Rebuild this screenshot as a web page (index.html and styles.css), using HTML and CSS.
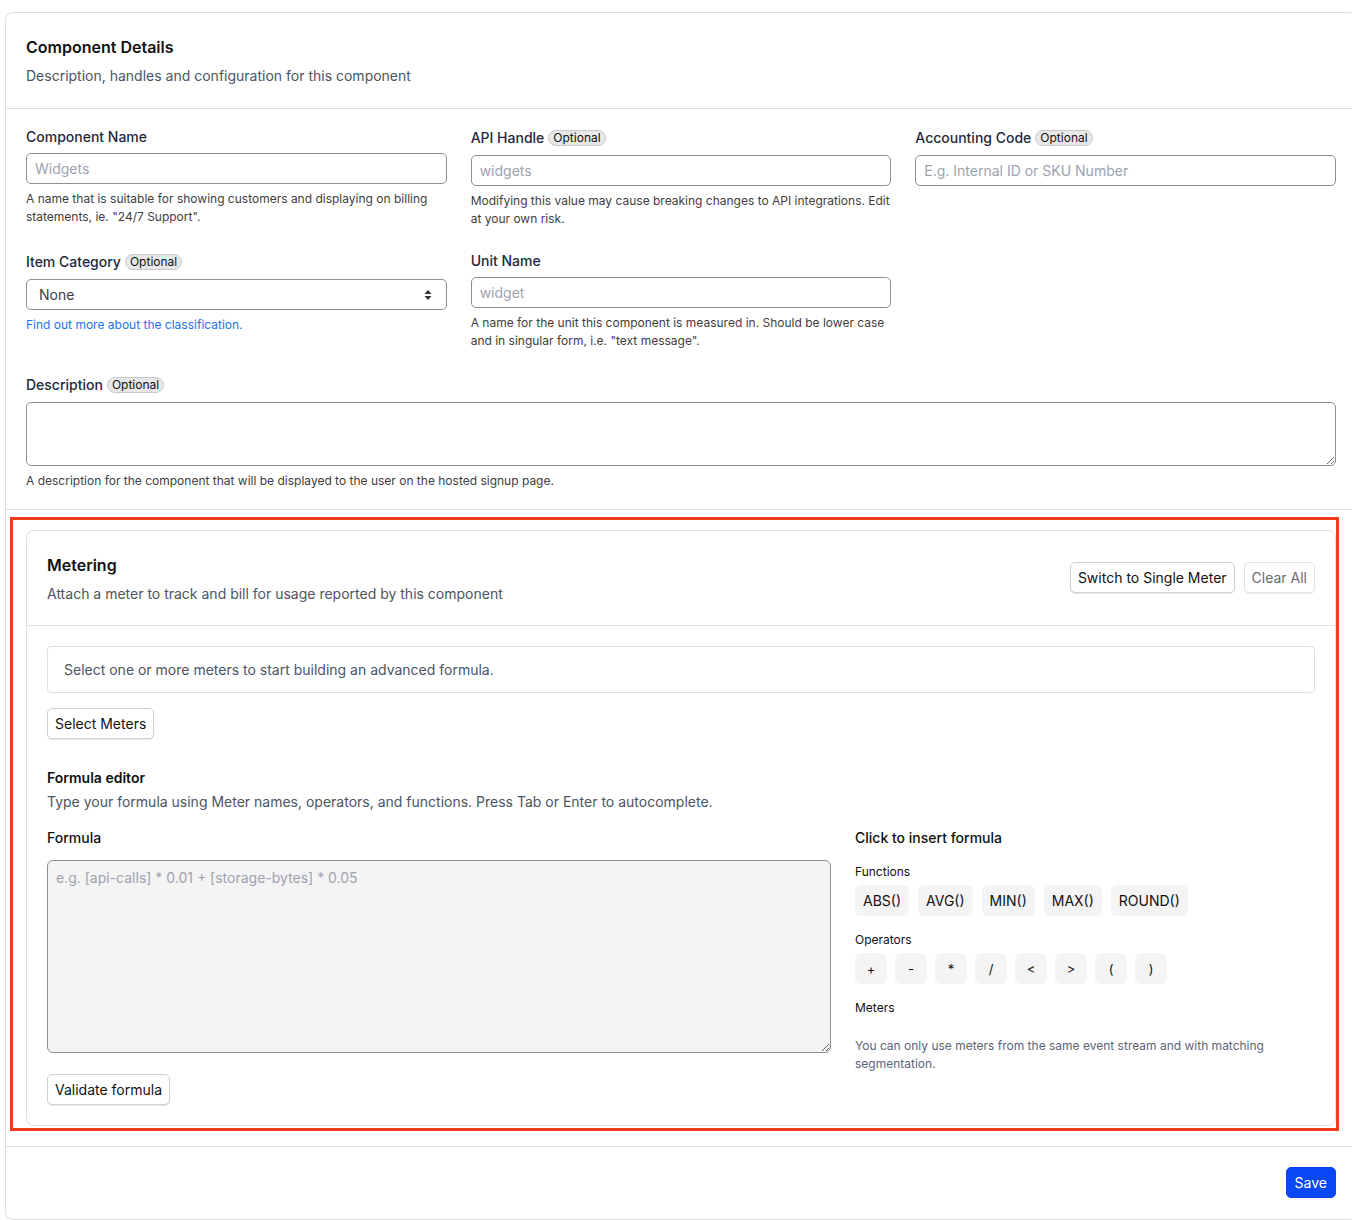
FILE: index.html
```html
<!DOCTYPE html>
<html lang="en">
<head>
<meta charset="utf-8">
<title>Component Details</title>
<link rel="stylesheet" href="styles.css">
</head>
<body>
<div class="card">
  <header class="card-head">
    <h1 class="title">Component Details</h1>
    <p class="subtitle">Description, handles and configuration for this component</p>
  </header>

  <section class="fields">
    <div class="field">
      <label class="label">Component Name</label>
      <input class="input" type="text" placeholder="Widgets">
      <p class="help">A name that is suitable for showing customers and displaying on billing statements, ie. "24/7 Support".</p>
    </div>
    <div class="field">
      <label class="label">API Handle <span class="badge">Optional</span></label>
      <input class="input" type="text" placeholder="widgets">
      <p class="help">Modifying this value may cause breaking changes to API integrations. Edit at your own risk.</p>
    </div>
    <div class="field">
      <label class="label">Accounting Code <span class="badge">Optional</span></label>
      <input class="input" type="text" placeholder="E.g. Internal ID or SKU Number">
    </div>

    <div class="field">
      <label class="label">Item Category <span class="badge">Optional</span></label>
      <div class="select-wrap">
        <select class="select"><option>None</option></select>
        <svg class="select-icon" width="8" height="12" viewBox="0 0 8 12"><path d="M4 1 L7.5 5 H0.5 Z M4 11 L7.5 7 H0.5 Z" fill="#333"/></svg>
      </div>
      <a class="link" href="#">Find out more about the classification.</a>
    </div>
    <div class="field">
      <label class="label">Unit Name</label>
      <input class="input" type="text" placeholder="widget">
      <p class="help">A name for the unit this component is measured in. Should be lower case and in singular form, i.e. "text message".</p>
    </div>
    <div class="field"></div>

    <div class="field span-3 desc-field">
      <label class="label">Description <span class="badge">Optional</span></label>
      <textarea class="textarea desc"></textarea>
      <p class="help">A description for the component that will be displayed to the user on the hosted signup page.</p>
    </div>
  </section>

  <section class="metering-section">
    <div class="metering">
      <div class="m-head">
        <div>
          <h2 class="title">Metering</h2>
          <p class="subtitle">Attach a meter to track and bill for usage reported by this component</p>
        </div>
        <div class="m-actions">
          <button class="btn">Switch to Single Meter</button>
          <button class="btn btn-muted">Clear All</button>
        </div>
      </div>
      <div class="m-body">
        <div class="info">Select one or more meters to start building an advanced formula.</div>
        <button class="btn btn-select">Select Meters</button>

        <h3 class="fe-title">Formula editor</h3>
        <p class="fe-sub">Type your formula using Meter names, operators, and functions. Press Tab or Enter to autocomplete.</p>

        <div class="fe-grid">
          <div class="fe-left">
            <div class="fe-label">Formula</div>
            <textarea class="textarea formula" placeholder="e.g. [api-calls] * 0.01 + [storage-bytes] * 0.05"></textarea>
            <button class="btn btn-validate">Validate formula</button>
          </div>
          <div class="fe-right">
            <div class="fe-label">Click to insert formula</div>
            <div class="group-label">Functions</div>
            <div class="chips">
              <span class="chip">ABS()</span>
              <span class="chip">AVG()</span>
              <span class="chip">MIN()</span>
              <span class="chip">MAX()</span>
              <span class="chip">ROUND()</span>
            </div>
            <div class="group-label">Operators</div>
            <div class="chips ops">
              <span class="chip op">+</span>
              <span class="chip op">-</span>
              <span class="chip op">*</span>
              <span class="chip op">/</span>
              <span class="chip op">&lt;</span>
              <span class="chip op">&gt;</span>
              <span class="chip op">(</span>
              <span class="chip op">)</span>
            </div>
            <div class="group-label">Meters</div>
            <p class="meters-help">You can only use meters from the same event stream and with matching segmentation.</p>
          </div>
        </div>
      </div>
    </div>
    <div class="highlight"></div>
  </section>

  <footer class="card-foot">
    <button class="btn-primary">Save</button>
  </footer>
</div>
</body>
</html>
```

FILE: styles.css
```css
* { box-sizing: border-box; }

html, body {
  margin: 0;
  padding: 0;
  overflow: hidden;
  background: #ffffff;
}

body {
  font-family: Inter, "Noto Sans", "Liberation Sans", sans-serif;
  color: #111111;
  font-size: 14px;
}

p, h1, h2, h3 { margin: 0; }

.card {
  margin: 12px 0 0 5px;
  width: 1352px;
  height: 1208px;
  border: 1px solid #dedede;
  border-radius: 8px;
  background: #fff;
}

.card-head {
  padding: 22px 20px 22px;
  border-bottom: 1px solid #e0e0e0;
}

.title {
  font-size: 16px;
  line-height: 24px;
  font-weight: 600;
  color: #111111;
}

.subtitle {
  margin-top: 7px;
  font-size: 14px;
  line-height: 20px;
  color: #4a5565;
}

.fields {
  display: grid;
  grid-template-columns: repeat(3, 1fr);
  column-gap: 24px;
  row-gap: 23px;
  padding: 18px 20px 19px;
  border-bottom: 1px solid #e0e0e0;
}

.span-3 { grid-column: 1 / span 3; }

.field {
  display: flex;
  flex-direction: column;
}

.desc-field {
  margin-top: 1px;
}

.label {
  display: flex;
  align-items: center;
  gap: 4px;
  min-height: 20px;
  font-size: 14px;
  line-height: 20px;
  font-weight: 500;
  color: #1e293b;
  margin-bottom: 6px;
}

.badge {
  display: inline-block;
  height: 16px;
  margin: 3px 0;
  padding: 0 4px;
  border: 1px solid #c9c9c9;
  border-radius: 9999px;
  background: #e8e8e8;
  font-size: 12px;
  line-height: 14px;
  font-weight: 400;
  color: #111;
}

.input {
  height: 31px;
  width: 100%;
  padding: 0 8px;
  border: 1px solid #8e8e8e;
  border-radius: 5px;
  font-family: inherit;
  font-size: 14px;
  color: #111;
  background: #fff;
}

.input::placeholder,
.textarea::placeholder {
  color: #9ca3af;
}

.help {
  margin-top: 6px;
  font-size: 12px;
  line-height: 18px;
  color: #404040;
}

.select-wrap {
  position: relative;
}

.select {
  appearance: none;
  -webkit-appearance: none;
  width: 100%;
  height: 31px;
  padding: 0 12px;
  border: 1px solid #8e8e8e;
  border-radius: 5px;
  background: #fff;
  font-family: inherit;
  font-size: 14px;
  color: #3d3d3d;
}

.select-icon {
  position: absolute;
  right: 15px;
  top: 10px;
  pointer-events: none;
}

.link {
  margin-top: 6px;
  font-size: 12px;
  line-height: 18px;
  color: #1d74e8;
  text-decoration: none;
}

.textarea {
  display: block;
  width: 100%;
  border: 1px solid #8e8e8e;
  border-radius: 5px;
  font-family: inherit;
  font-size: 14px;
  padding: 8px;
  color: #111;
}

.desc {
  height: 64px;
  background: #fff;
}

.metering-section {
  position: relative;
  padding: 20px 20px 20px;
  border-bottom: 1px solid #e0e0e0;
}

.highlight {
  position: absolute;
  left: 4px;
  top: 7px;
  width: 1329px;
  height: 614px;
  border: 3px solid #f5391c;
  pointer-events: none;
}

.metering {
  border: 1px solid #e0e0e0;
  border-radius: 8px;
}

.m-head {
  display: flex;
  justify-content: space-between;
  align-items: center;
  padding: 22px 20px 21px;
  border-bottom: 1px solid #e0e0e0;
}

.m-actions {
  display: flex;
  gap: 9px;
  margin-top: -2px;
}

.btn {
  height: 31px;
  padding: 0 7px;
  border: 1px solid #cfcfcf;
  border-radius: 5px;
  background: #fff;
  font-family: inherit;
  font-size: 14px;
  color: #111;
  box-shadow: 0 1px 1px rgba(0, 0, 0, 0.08);
}

.btn-muted {
  color: #6b6b6b;
  border-color: #e3e3e3;
}

.m-body {
  padding: 20px 20px 20px;
}

.info {
  padding: 13px 16px;
  border: 1px solid #e0e0e0;
  border-radius: 4px;
  font-size: 14px;
  line-height: 19px;
  color: #4a5565;
}

.btn-select {
  margin-top: 15px;
}

.fe-title {
  margin-top: 29px;
  font-size: 14px;
  line-height: 20px;
  font-weight: 600;
  color: #111;
}

.fe-sub {
  margin-top: 4px;
  font-size: 14px;
  line-height: 20px;
  color: #4a5565;
}

.fe-grid {
  margin-top: 16px;
  display: grid;
  grid-template-columns: 1fr 460px;
  column-gap: 24px;
}

.fe-label {
  font-size: 14px;
  line-height: 20px;
  font-weight: 500;
  color: #111;
}

.formula {
  margin-top: 12px;
  height: 193px;
  background: #f4f4f4;
  border-radius: 6px;
}

.btn-validate {
  margin-top: 21px;
}

.group-label {
  margin-top: 15px;
  font-size: 12px;
  line-height: 18px;
  color: #111;
}

.chips {
  display: flex;
  gap: 9px;
  margin-top: 4px;
}

.chips.ops {
  gap: 8px;
}

.chip {
  display: inline-flex;
  align-items: center;
  justify-content: center;
  height: 31px;
  padding: 0 8px;
  border-radius: 6px;
  background: #f4f4f4;
  font-size: 14px;
  color: #111;
}

.chip.op {
  width: 32px;
  padding: 0;
  font-size: 13px;
}

.meters-help {
  margin-top: 20px;
  font-size: 12px;
  line-height: 17.5px;
  color: #5b6577;
}

.card-foot {
  display: flex;
  justify-content: flex-end;
  padding: 20px 20px;
}

.btn-primary {
  height: 31px;
  padding: 0 8px;
  border: 1px solid #0a44e8;
  border-radius: 5px;
  background: #0a47f5;
  color: #fff;
  font-family: inherit;
  font-size: 14px;
}
```
